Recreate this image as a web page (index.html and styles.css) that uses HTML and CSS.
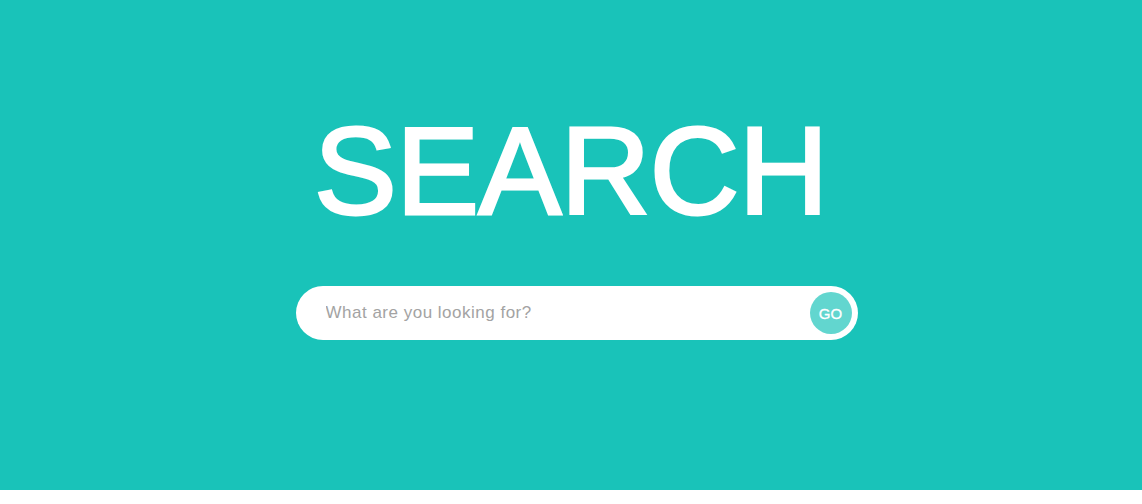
FILE: index.html
```html
<!DOCTYPE html>
<html>
<head>
<meta charset="utf-8">
<link rel="stylesheet" href="styles.css">
</head>
<body>
<main class="hero">
  <h1 class="title">SEARCH</h1>
  <form class="search">
    <input class="search-input" type="text" placeholder="What are you looking for?">
    <button class="search-btn" type="button">GO</button>
  </form>
</main>
</body>
</html>
```
FILE: styles.css
```css
html, body {
  margin: 0;
  padding: 0;
  background: #ffffff;
}
.hero {
  height: 490px;
  box-sizing: border-box;
  background: #19c3b9;
  display: flex;
  flex-direction: column;
  align-items: center;
  padding-top: 108px;
  font-family: "Liberation Sans", Arial, sans-serif;
}
.title {
  margin: 0;
  color: #ffffff;
  font-size: 124px;
  line-height: 127px;
  font-weight: 400;
  font-kerning: none;
  letter-spacing: -0.5px;
  -webkit-text-stroke: 3px #ffffff;
}
.search {
  margin: 51px 0 0 11px;
  width: 562px;
  height: 54px;
  box-sizing: border-box;
  background: #ffffff;
  border-radius: 27px;
  display: flex;
  align-items: center;
  padding: 0 6px 0 30px;
}
.search-input {
  flex: 1;
  border: 0;
  outline: none;
  background: transparent;
  font-family: "Liberation Sans", Arial, sans-serif;
  font-size: 17px;
  letter-spacing: 0.5px;
  color: #555;
  padding: 0;
}
.search-input::placeholder {
  color: #a3a3a3;
}
.search-btn {
  width: 42px;
  height: 42px;
  border-radius: 50%;
  border: 0;
  background: #62d6cf;
  color: #ffffff;
  font-family: "Liberation Sans", Arial, sans-serif;
  font-size: 15px;
  -webkit-text-stroke: 0.3px #ffffff;
  padding: 0;
}
```
